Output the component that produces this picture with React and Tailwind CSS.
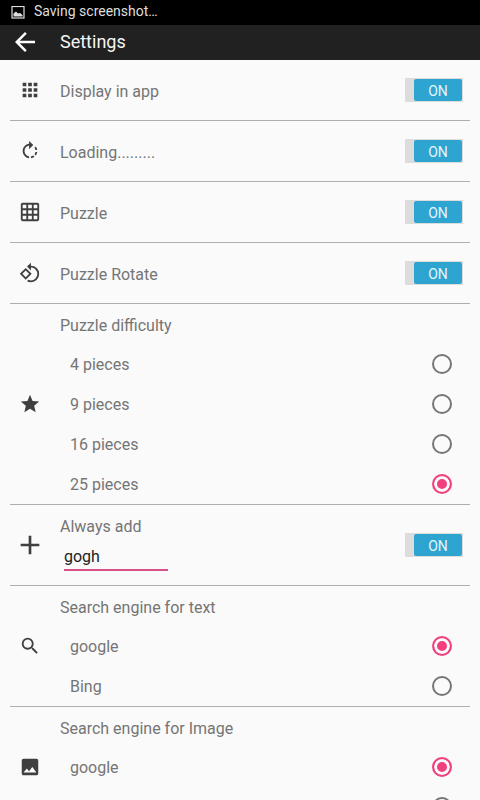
import { useState } from "react";
import {
  MdAdd,
  MdApps,
  MdArrowBack,
  MdGridOn,
  MdImage,
  MdRotate90DegreesCcw,
  MdRotateRight,
  MdSearch,
  MdStar,
} from "react-icons/md";

function Toggle({ label }) {
  const [on, setOn] = useState(true);
  return (
    <button
      type="button"
      role="switch"
      aria-checked={on}
      aria-label={label}
      onClick={() => setOn(!on)}
      className={`mr-[7px] flex h-6 w-[58px] shrink-0 bg-[#dcdcdc] p-px ${on ? "justify-end" : "justify-start"}`}
    >
      <span
        className={`flex h-full w-12 items-center justify-center rounded-xs pt-0.5 text-sm ${on ? "bg-[#2ea5d0] text-[#e4f6fc]" : "bg-[#b5b5b5] text-white"}`}
      >
        {on ? "ON" : "OFF"}
      </span>
    </button>
  );
}

function Section({ icon: Icon, iconClass = "size-[22px]", children }) {
  return (
    <section className="flex items-center border-b border-[#aeaeae]">
      <div className="flex w-10 shrink-0 justify-center text-[#3f3f3f]">
        <Icon className={iconClass} aria-hidden="true" />
      </div>
      <div className="min-w-0 flex-1 pl-[10px]">{children}</div>
    </section>
  );
}

function ToggleRow({ icon, label }) {
  return (
    <Section icon={icon}>
      <div className="flex h-[60px] items-center justify-between">
        <span className="pt-1">{label}</span>
        <Toggle label={label} />
      </div>
    </Section>
  );
}

function RadioSection({ icon, title, name, options, initial }) {
  const [value, setValue] = useState(initial);
  return (
    <Section icon={icon}>
      <fieldset>
        <legend className="flex h-10 items-center pt-1">{title}</legend>
        {options.map((option) => (
          <label key={option} className="flex h-10 items-center justify-between pr-[18px] pl-[10px]">
            <span className="pt-0.5">{option}</span>
            <input
              type="radio"
              name={name}
              checked={value === option}
              onChange={() => setValue(option)}
              className="size-5 appearance-none rounded-full border-2 border-[#757575] checked:border-[#f0407f] checked:bg-[#f0407f] checked:shadow-[inset_0_0_0_3px_#fafafa]"
            />
          </label>
        ))}
      </fieldset>
    </Section>
  );
}

export default function App() {
  return (
    <div className="flex h-screen flex-col overflow-hidden bg-[#fafafa] font-[Roboto,sans-serif] text-base text-[#757575]">
      <div className="flex h-[25px] shrink-0 items-center gap-[9px] bg-black px-[11px] text-sm text-[#dedede]">
        <svg viewBox="0 0 14 14" className="size-[14px]" aria-hidden="true">
          <rect x="1" y="0.5" width="12" height="11.5" fill="none" stroke="#dedede" strokeWidth="1.2" />
          <path d="M2.5 10.5V7.5L5 5.5L7 7.5L9 7L11.5 9V10.5Z" fill="#dedede" />
        </svg>
        <span className="pb-1">Saving screenshot…</span>
      </div>
      <header className="flex h-[35px] shrink-0 items-center gap-5 bg-[#212121] px-[10px] pb-0.5 text-white">
        <button type="button" aria-label="Back">
          <MdArrowBack className="size-[30px]" />
        </button>
        <h1 className="text-lg text-[#f5f5f5]">Settings</h1>
      </header>
      <main className="min-h-0 flex-1 overflow-hidden px-[10px]">
        <ToggleRow icon={MdApps} label="Display in app" />
        <ToggleRow icon={MdRotateRight} label="Loading........." />
        <ToggleRow icon={MdGridOn} label="Puzzle" />
        <ToggleRow icon={MdRotate90DegreesCcw} label="Puzzle Rotate" />
        <RadioSection
          icon={MdStar}
          title="Puzzle difficulty"
          name="difficulty"
          options={["4 pieces", "9 pieces", "16 pieces", "25 pieces"]}
          initial="25 pieces"
        />
        <Section icon={MdAdd} iconClass="size-8">
          <div className="flex h-20 items-center justify-between">
            <div className="flex h-full flex-col pt-[10px]">
              <label htmlFor="always-add">Always add</label>
              <input
                id="always-add"
                type="text"
                defaultValue="gogh"
                className="ml-1 h-8 w-26 border-b-2 border-[#d94f8a] bg-transparent pt-1 text-[#212121] outline-none"
              />
            </div>
            <Toggle label="Always add" />
          </div>
        </Section>
        <RadioSection
          icon={MdSearch}
          title="Search engine for text"
          name="text-engine"
          options={["google", "Bing"]}
          initial="google"
        />
        <RadioSection
          icon={MdImage}
          title="Search engine for Image"
          name="image-engine"
          options={["google", "Bing"]}
          initial="google"
        />
      </main>
    </div>
  );
}
